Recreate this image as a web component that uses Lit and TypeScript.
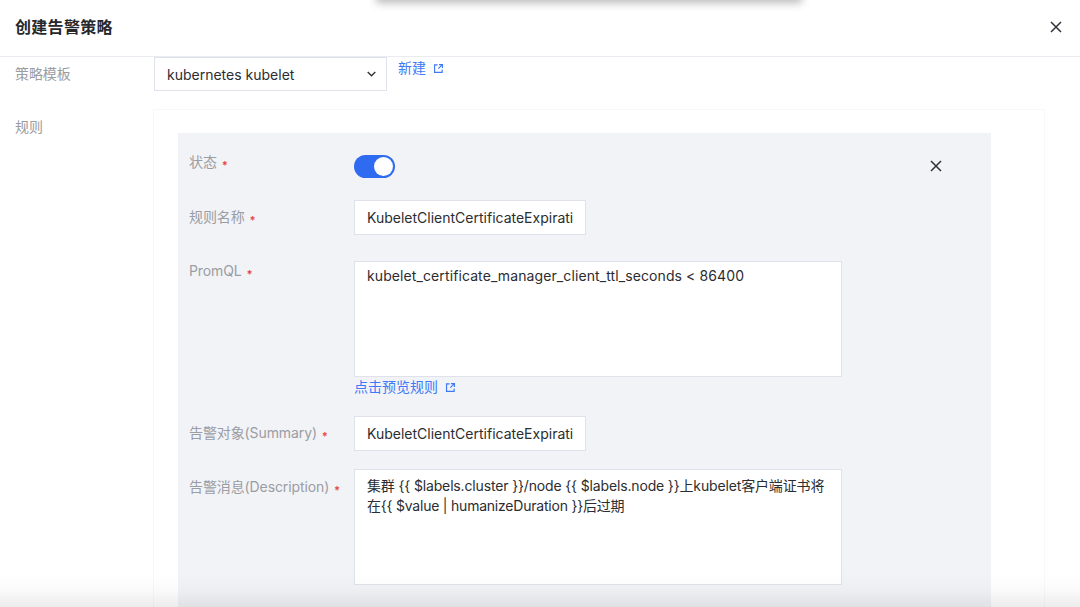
import { LitElement, html, css } from "lit";
import { customElement } from "lit/decorators.js";

const ext = html`<svg class="ext" viewBox="0 0 12 12" fill="none" stroke="currentColor" stroke-width="1.3"><path d="M5 2H1.7v8.3H10V7"/><path d="M6.5 1.7h3.8v3.8M10.2 1.8 5.8 6.2"/></svg>`;
const close = html`<svg class="x" viewBox="0 0 14 14" fill="none" stroke="#2f3236" stroke-width="1.5"><path d="M2 2l10 10M12 2 2 12"/></svg>`;

@customElement("app-root")
export class AppRoot extends LitElement {
  static styles = css`
    :host { display: block; width: 1080px; height: 607px; position: relative; overflow: hidden; background: #fff;
      font-family: Inter, "Noto Sans CJK SC", sans-serif; font-size: 14px; color: #2b2d31; }
    .topshadow { position: absolute; left: 378px; top: -14px; width: 422px; height: 14px; background: #ccc;
      box-shadow: 0 1px 8px 2px rgba(0,0,0,.27); }
    header { box-sizing: border-box; border-bottom: 1px solid #e9ebf0; display: flex; align-items: center; justify-content: space-between; padding: 0 17px 2px 15px; height: 57px; }
    h1 { margin: 0; font-size: 16px; line-height: 24px; font-weight: 700; color: #26282c; letter-spacing: .3px; }
    .x { display: block; width: 14px; height: 14px; flex: none; }
    .tpl { display: flex; padding-left: 15px; }
    .lbl { color: #9a9da3; line-height: 20px; letter-spacing: -.1px; }
    .tpl .lbl { width: 139px; padding-top: 7px; }
    .select { width: 233px; height: 34px; box-sizing: border-box; border: 1.5px solid #dfe2ea; border-top-width: 1px; padding: 0 10px 0 12px;
      display: flex; align-items: center; justify-content: space-between; color: #2b2d31; }
    .link { color: #3f79f5; display: inline-flex; align-items: center; gap: 7px; line-height: 20px; }
    .ext { flex: none; width: 11px; height: 11px; }
    .tpl .link { margin: 1px 0 0 11px; align-self: flex-start; }
    .rules { display: flex; padding: 18px 0 0 15px; }
    .rules > .lbl { width: 138px; padding-top: 8px; }
    .card { width: 892px; height: 520px; box-sizing: border-box; border: 1px solid #f8f8f9; padding: 23px 0 0 24px; }
    .panel { width: 813px; height: 500px; background: #f2f3f7; padding: 17px 0 0 11px; box-sizing: border-box; }
    .row { display: grid; grid-template-columns: 165px 1fr; align-items: start; }
    .row .lbl { padding-top: 2px; }
    .req { color: #e5484d; font-size: 11px; font-weight: 700; margin-left: 1px; vertical-align: -2px; line-height: 1; }
    .r-status { height: 50px; }
    .status-ctl { display: flex; align-items: center; justify-content: space-between; width: 589px; height: 32px; }
    .toggle { width: 41px; height: 23px; border-radius: 12px; background: #2f6bf0; position: relative; }
    .knob { position: absolute; right: 2px; top: 2px; width: 19px; height: 19px; border-radius: 50%; background: #fff; }
    .input { width: 232px; height: 35px; box-sizing: border-box; background: #fff; border: 1.5px solid #dfe2ea; padding: 1px 12px 0;
      line-height: 31px; white-space: nowrap; }
    .area { width: 488px; height: 116px; box-sizing: border-box; background: #fff; border: 1.5px solid #dfe2ea; padding: 4px 12px; line-height: 20px; }
    .prom { letter-spacing: .1px; }
    .desc { letter-spacing: -.15px; padding-top: 6px; }
    .line2 { letter-spacing: -.22px; }
    .r-name { height: 61px; }
    .row.r-name .lbl { padding-top: 7px; }
    .row.r-prom .lbl { padding-top: 0; }
    .linkrow { height: 39px; }
    .r-sum { height: 53px; }
    .row.r-sum .lbl { padding-top: 7px; }
    .row.r-desc .lbl { padding-top: 8px; }
    .fade { position: absolute; left: 0; right: 0; bottom: 0; height: 34px;
      background: linear-gradient(to bottom, rgba(0,0,0,0), rgba(0,0,0,.018) 50%, rgba(0,0,0,.075)); pointer-events: none; }
  `;

  render() {
    return html`
      <div class="topshadow"></div>
      <header><h1>创建告警策略</h1>${close}</header>
      <div class="tpl">
        <div class="lbl">策略模板</div>
        <div class="select">kubernetes kubelet
          <svg width="9" height="6" viewBox="0 0 9 6" fill="none" stroke="#33363b" stroke-width="1.4"><path d="M.7 1l3.8 3.8L8.3 1"/></svg>
        </div>
        <a class="link">新建 ${ext}</a>
      </div>
      <div class="rules">
        <div class="lbl">规则</div>
        <div class="card">
          <div class="panel">
            <div class="row r-status">
              <div class="lbl">状态 <span class="req">*</span></div>
              <div class="status-ctl">
                <div class="toggle"><div class="knob"></div></div>
                ${close}
              </div>
            </div>
            <div class="row r-name">
              <div class="lbl">规则名称 <span class="req">*</span></div>
              <div class="input">KubeletClientCertificateExpirati</div>
            </div>
            <div class="row r-prom">
              <div class="lbl">PromQL <span class="req">*</span></div>
              <div>
                <div class="area prom">kubelet_certificate_manager_client_ttl_seconds &lt; 86400</div>
                <div class="linkrow"><a class="link">点击预览规则 ${ext}</a></div>
              </div>
            </div>
            <div class="row r-sum">
              <div class="lbl">告警对象(Summary) <span class="req">*</span></div>
              <div class="input">KubeletClientCertificateExpirati</div>
            </div>
            <div class="row r-desc">
              <div class="lbl">告警消息(Description) <span class="req">*</span></div>
              <div class="area desc">集群 {{ $labels.cluster }}/node {{ $labels.node }}上kubelet客户端证书将<span class="line2">在{{ $value | humanizeDuration }}后过期</span></div>
            </div>
          </div>
        </div>
      </div>
      <div class="fade"></div>
    `;
  }
}
